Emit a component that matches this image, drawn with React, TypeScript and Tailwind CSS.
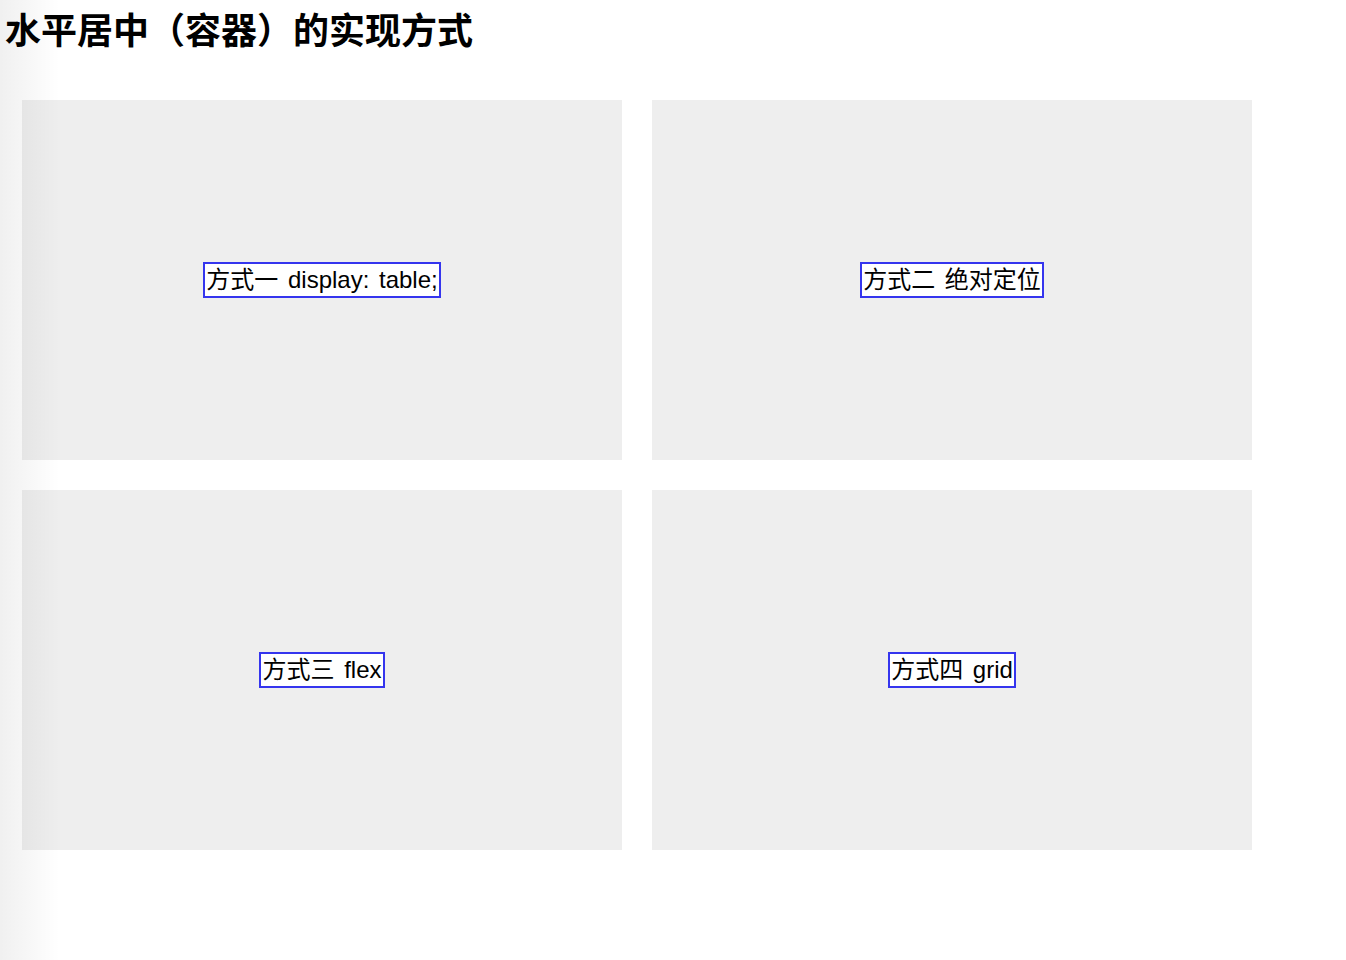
const methods = ['方式一 display: table;', '方式二 绝对定位', '方式三 flex', '方式四 grid'];

function Label({ text }: { text: string }) {
  return (
    <span className="inline-block whitespace-pre border-2 border-[#3535ee] bg-white px-[1px] text-[24px] leading-[32px] text-black [word-spacing:3px]">
      {text}
    </span>
  );
}

export default function App() {
  return (
    <div className="relative min-h-[960px] bg-white font-['Liberation_Sans','Noto_Sans_CJK_SC',sans-serif]">
      <h1 className="pl-[5px] pt-[8px] text-[36px] font-bold leading-[48px] text-black">
        水平居中（容器）的实现方式
      </h1>

      <div className="ml-[22px] mt-[44px] grid grid-cols-[600px_600px] gap-[30px]">
        <div className="flex h-[360px] items-center justify-center bg-[#eeeeee]">
          <Label text={methods[0]} />
        </div>
        <div className="flex h-[360px] items-center justify-center bg-[#eeeeee]">
          <Label text={methods[1]} />
        </div>
        <div className="flex h-[360px] items-center justify-center bg-[#eeeeee]">
          <Label text={methods[2]} />
        </div>
        <div className="grid h-[360px] place-items-center bg-[#eeeeee]">
          <Label text={methods[3]} />
        </div>
      </div>

      {/* left edge shade */}
      <div className="pointer-events-none absolute inset-y-0 left-0 w-[60px] bg-gradient-to-r from-black/[0.06] to-transparent" />
    </div>
  );
}
